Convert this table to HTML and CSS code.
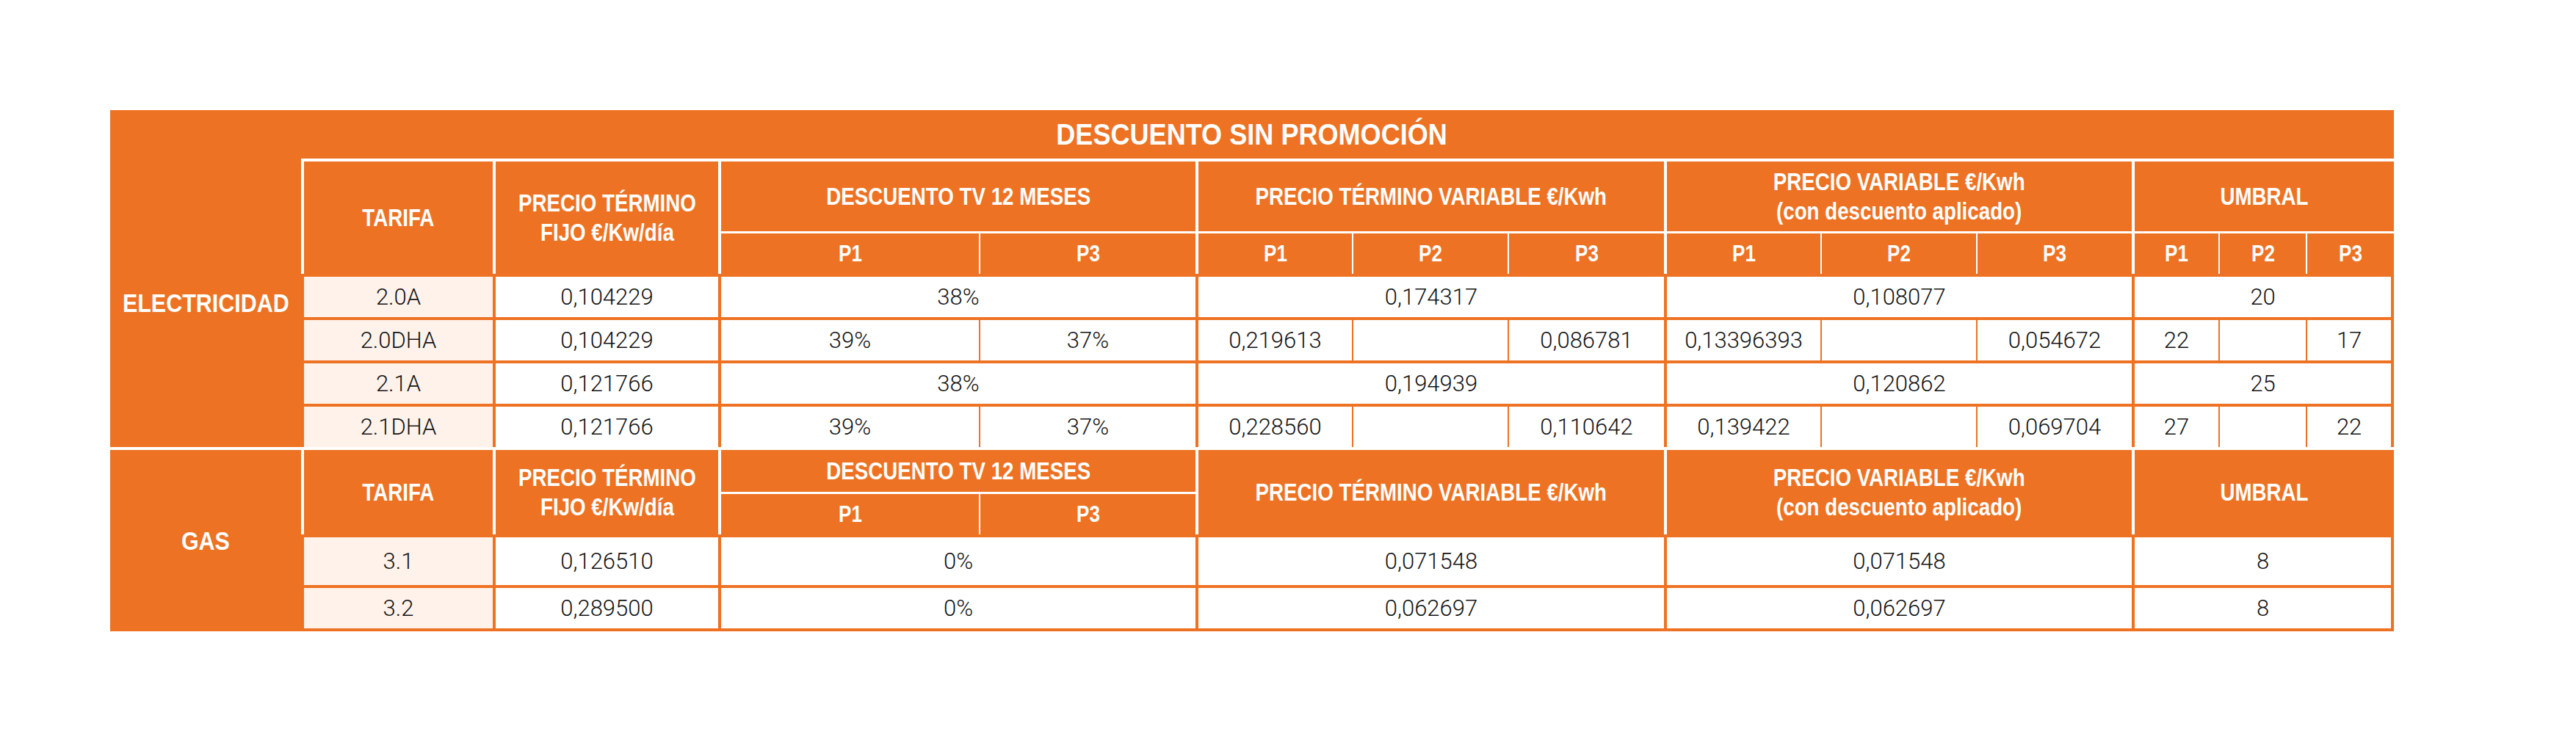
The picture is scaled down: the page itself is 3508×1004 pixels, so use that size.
FILE: index.html
```html
<!DOCTYPE html>
<html lang="es">
<head>
<meta charset="utf-8">
<title>Descuento sin promoción</title>
<link rel="stylesheet" href="styles.css">
</head>
<body>
<div class="page">
<table class="tarifas">
  <colgroup>
    <col class="w-label"><col class="w-tarifa"><col class="w-fijo">
    <col class="w-dp1"><col class="w-dp3">
    <col class="w-v"><col class="w-v2"><col class="w-v">
    <col class="w-v"><col class="w-v2"><col class="w-v2">
    <col class="w-u1"><col class="w-u2"><col class="w-u3">
  </colgroup>
  <tr class="r-title">
    <th class="title" colspan="14"><span class="c">DESCUENTO SIN PROMOCIÓN</span></th>
  </tr>
  <tr class="r-ha">
    <th class="label" rowspan="6"><span class="c">ELECTRICIDAD</span></th>
    <th class="h g" rowspan="2"><span class="c">TARIFA</span></th>
    <th class="h g" rowspan="2"><span class="c">PRECIO TÉRMINO<br>FIJO €/Kw/día</span></th>
    <th class="h g" colspan="2"><span class="c">DESCUENTO TV 12 MESES</span></th>
    <th class="h g" colspan="3"><span class="c">PRECIO TÉRMINO VARIABLE €/Kwh</span></th>
    <th class="h g" colspan="3"><span class="c">PRECIO VARIABLE €/Kwh<br>(con descuento aplicado)</span></th>
    <th class="h g" colspan="3"><span class="c">UMBRAL</span></th>
  </tr>
  <tr class="r-hb">
    <th class="h sub g"><span class="c">P1</span></th><th class="h sub s"><span class="c">P3</span></th>
    <th class="h sub g"><span class="c">P1</span></th><th class="h sub s"><span class="c">P2</span></th><th class="h sub s"><span class="c">P3</span></th>
    <th class="h sub g"><span class="c">P1</span></th><th class="h sub s"><span class="c">P2</span></th><th class="h sub s"><span class="c">P3</span></th>
    <th class="h sub g"><span class="c">P1</span></th><th class="h sub s"><span class="c">P2</span></th><th class="h sub s"><span class="c">P3</span></th>
  </tr>
  <tr class="r-d">
    <td class="d g tar">2.0A</td>
    <td class="d g">0,104229</td>
    <td class="d g" colspan="2">38%</td>
    <td class="d g" colspan="3">0,174317</td>
    <td class="d g" colspan="3">0,108077</td>
    <td class="d g last" colspan="3">20</td>
  </tr>
  <tr class="r-d">
    <td class="d g tar">2.0DHA</td>
    <td class="d g">0,104229</td>
    <td class="d g">39%</td><td class="d s">37%</td>
    <td class="d g">0,219613</td><td class="d s"></td><td class="d s">0,086781</td>
    <td class="d g">0,13396393</td><td class="d s"></td><td class="d s">0,054672</td>
    <td class="d g">22</td><td class="d s"></td><td class="d s last">17</td>
  </tr>
  <tr class="r-d">
    <td class="d g tar">2.1A</td>
    <td class="d g">0,121766</td>
    <td class="d g" colspan="2">38%</td>
    <td class="d g" colspan="3">0,194939</td>
    <td class="d g" colspan="3">0,120862</td>
    <td class="d g last" colspan="3">25</td>
  </tr>
  <tr class="r-d">
    <td class="d g tar">2.1DHA</td>
    <td class="d g">0,121766</td>
    <td class="d g">39%</td><td class="d s">37%</td>
    <td class="d g">0,228560</td><td class="d s"></td><td class="d s">0,110642</td>
    <td class="d g">0,139422</td><td class="d s"></td><td class="d s">0,069704</td>
    <td class="d g">27</td><td class="d s"></td><td class="d s last">22</td>
  </tr>
  <tr class="r-ga">
    <th class="label gas" rowspan="4"><span class="c">GAS</span></th>
    <th class="h g" rowspan="2"><span class="c">TARIFA</span></th>
    <th class="h g" rowspan="2"><span class="c">PRECIO TÉRMINO<br>FIJO €/Kw/día</span></th>
    <th class="h g" colspan="2"><span class="c">DESCUENTO TV 12 MESES</span></th>
    <th class="h g" colspan="3" rowspan="2"><span class="c">PRECIO TÉRMINO VARIABLE €/Kwh</span></th>
    <th class="h g" colspan="3" rowspan="2"><span class="c">PRECIO VARIABLE €/Kwh<br>(con descuento aplicado)</span></th>
    <th class="h g" colspan="3" rowspan="2"><span class="c">UMBRAL</span></th>
  </tr>
  <tr class="r-gb">
    <th class="h sub g"><span class="c">P1</span></th><th class="h sub s"><span class="c">P3</span></th>
  </tr>
  <tr class="r-gd1">
    <td class="d g tar">3.1</td>
    <td class="d g">0,126510</td>
    <td class="d g" colspan="2">0%</td>
    <td class="d g" colspan="3">0,071548</td>
    <td class="d g" colspan="3">0,071548</td>
    <td class="d g last" colspan="3">8</td>
  </tr>
  <tr class="r-gd2">
    <td class="d g tar bottom">3.2</td>
    <td class="d g bottom">0,289500</td>
    <td class="d g bottom" colspan="2">0%</td>
    <td class="d g bottom" colspan="3">0,062697</td>
    <td class="d g bottom" colspan="3">0,062697</td>
    <td class="d g last bottom" colspan="3">8</td>
  </tr>
</table>
</div>
</body>
</html>
```
FILE: styles.css
```css
html, body {
  margin: 0;
  padding: 0;
  background: #ffffff;
}

.page {
  padding: 150px 0 0 150px;
  height: 854px;
}

.tarifas {
  table-layout: fixed;
  border-collapse: separate;
  border-spacing: 0;
  width: 3110px;
  background: #ee7223;
}

.w-label { width: 260px; }
.w-tarifa { width: 261px; }
.w-fijo { width: 307px; }
.w-dp1 { width: 355px; }
.w-dp3 { width: 295px; }
.w-v { width: 213px; }
.w-v2 { width: 212px; }
.w-u1 { width: 118px; }
.w-u2 { width: 119px; }
.w-u3 { width: 120px; }

.tarifas th,
.tarifas td {
  box-sizing: border-box;
  padding: 0;
  text-align: center;
  vertical-align: middle;
}

.r-title { height: 66px; }
.r-ha { height: 99px; }
.r-hb { height: 58px; }
.r-d { height: 59px; }
.r-ga { height: 61px; }
.r-gb { height: 58px; }
.r-gd1 { height: 69px; }
.r-gd2 { height: 63px; }

.title,
.label,
.h {
  color: #ffffff;
  font-family: "Liberation Sans", Arial, sans-serif;
  font-weight: 700;
  background: #ee7223;
  white-space: nowrap;
}

/* condensed lettering, as in the original artwork */
.c {
  display: inline-block;
  transform: scaleX(0.84);
  transform-origin: center center;
}

.title {
  font-size: 41px;
  padding-top: 4px;
}

.title .c { transform: scaleX(0.88); }

.label {
  font-size: 35px;
  border: 0;
}

.label .c { transform: scaleX(0.87); }

.label.gas {
  border-top: 4px solid #ffffff;
}

.h {
  font-size: 33px;
  line-height: 40px;
  border-top: 4px solid #ffffff;
}

.h.sub {
  border-top: 3px solid #ffffff;
  font-size: 31px;
}

.h.g { border-left: 4px solid #ffffff; }
.h.s { border-left: 2px solid #ffffff; }

.d {
  background: #ffffff;
  color: #141414;
  font-family: Roboto, "Liberation Sans", sans-serif;
  font-weight: 300;
  font-size: 31px;
  border-top: 4px solid #ee7223;
}

.d.g { border-left: 4px solid #ee7223; }
.d.s { border-left: 2px solid #ee7223; }
.d.last { border-right: 4px solid #ee7223; }
.d.bottom { border-bottom: 4px solid #ee7223; }

.d.tar { background: #fef2ea; }
```
